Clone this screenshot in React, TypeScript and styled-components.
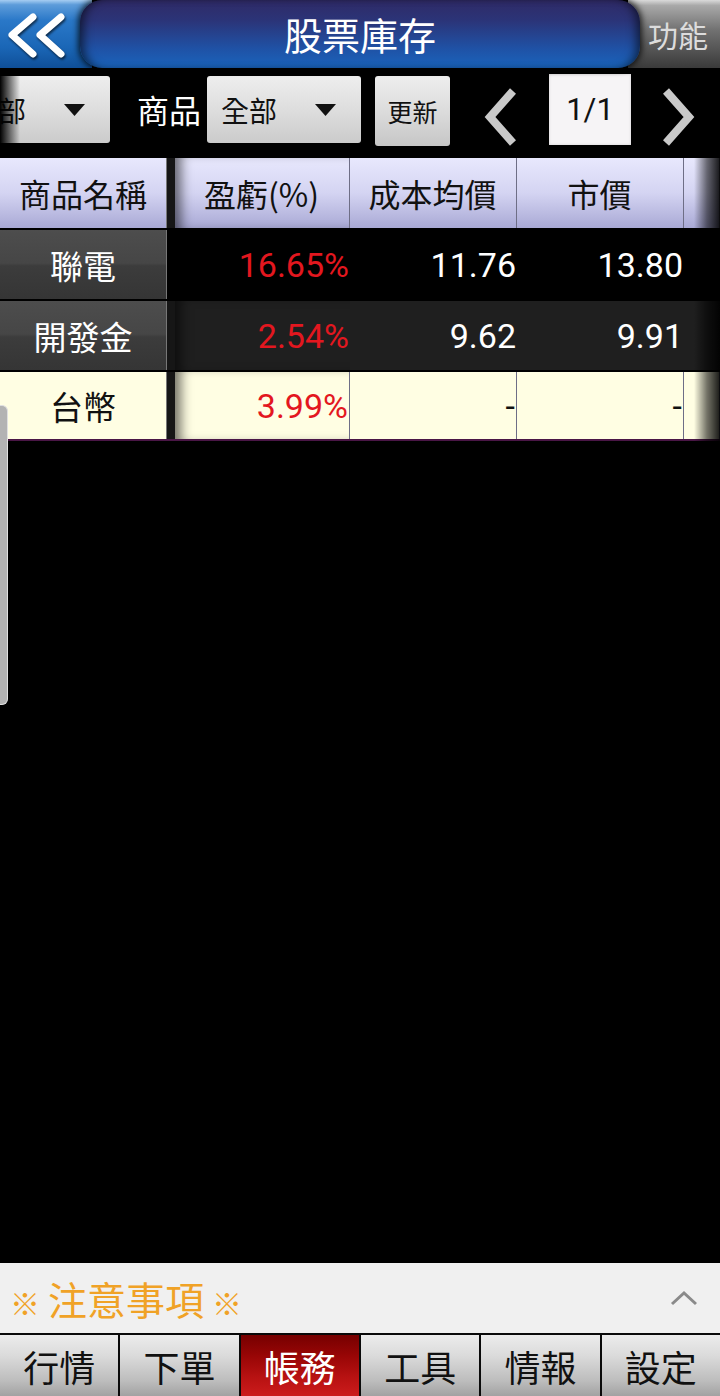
import React from "react";
import styled, { createGlobalStyle, css } from "styled-components";

const GlobalStyle = createGlobalStyle`
  html, body {
    margin: 0;
    padding: 0;
    background: #000;
  }
  body {
    font-family: "Noto Sans CJK TC", "Noto Sans", sans-serif;
  }
  * {
    box-sizing: border-box;
  }
`;

const Screen = styled.div`
  position: relative;
  width: 720px;
  height: 1396px;
  display: flex;
  flex-direction: column;
  background: #000;
  overflow: hidden;
`;

const TitleBar = styled.div`
  display: flex;
  height: 68px;
  margin-bottom: 2px;
`;

const BackButton = styled.div`
  width: 92px;
  display: flex;
  align-items: center;
  background: linear-gradient(180deg, #a6cdf2 0%, #5d9cda 7%, #2a78c8 30%, #1a66b6 70%, #0f4f98 100%);

  svg {
    filter: drop-shadow(1px 2px 1px rgba(0, 0, 0, 0.6));
  }
`;

const TitlePill = styled.div`
  position: relative;
  z-index: 1;
  flex: 1;
  margin: 0 -12px;
  border-radius: 22px;
  background: linear-gradient(180deg, #2f2a66 0%, #2b3478 30%, #1f52a6 72%, #1a64bc 100%);
  box-shadow: 0 0 6px 2px rgba(0, 0, 0, 0.75), inset 8px 0 10px -4px rgba(0, 0, 0, 0.55),
    inset -8px 0 10px -4px rgba(0, 0, 0, 0.55);
  color: #fff;
  font-size: 38px;
  line-height: 68px;
  text-align: center;
`;

const FuncButton = styled.div`
  width: 92px;
  padding-left: 20px;
  background: linear-gradient(180deg, #dadada 0%, #a9a9a9 8%, #707070 45%, #3a3a3a 100%);
  color: #dcdcdc;
  font-size: 30px;
  line-height: 68px;
  white-space: nowrap;
`;

const Toolbar = styled.div`
  position: relative;
  display: flex;
  align-items: flex-start;
  height: 88px;
  padding-top: 6px;
`;

const LeftFade = styled.div`
  position: absolute;
  left: 0;
  top: 0;
  bottom: 0;
  width: 20px;
  background: linear-gradient(90deg, #000 0%, rgba(0, 0, 0, 0.6) 40%, rgba(0, 0, 0, 0) 100%);
`;

const Dropdown = styled.div<{ $offset?: number }>`
  flex: none;
  width: 154px;
  height: 67px;
  margin-left: ${(p) => p.$offset ?? 0}px;
  display: flex;
  align-items: center;
  justify-content: space-between;
  padding: 0 25px 0 14px;
  border-radius: 3px;
  background: linear-gradient(180deg, #eeeeee 0%, #dcdcdc 55%, #cbcbcb 100%);
  color: #111;
  font-size: 28px;
`;

const Label = styled.div`
  margin: 0 6px 0 27px;
  color: #fff;
  font-size: 32px;
  line-height: 67px;
`;

const RefreshButton = styled.div`
  width: 75px;
  height: 70px;
  margin-left: 14px;
  display: flex;
  align-items: center;
  justify-content: center;
  border-radius: 3px;
  background: linear-gradient(180deg, #eeeeee 0%, #dadada 55%, #c6c6c6 100%);
  color: #111;
  font-size: 25px;
`;

const NavArrow = styled.svg<{ $gap: number }>`
  flex: none;
  margin-left: ${(p) => p.$gap}px;
  margin-top: 12px;
`;

const PageBox = styled.div`
  width: 82px;
  height: 71px;
  margin: -2px 0 0 31px;
  display: flex;
  align-items: center;
  justify-content: center;
  background: #f6f4f6;
  box-shadow: inset 0 0 3px rgba(0, 0, 0, 0.15);
  color: #111;
  font-family: Roboto, "Noto Sans", sans-serif;
  font-size: 31px;
`;

const Table = styled.div`
  position: relative;
  display: flex;
  flex-direction: column;
  gap: 2px;
`;

const RightFade = styled.div`
  position: absolute;
  top: 0;
  right: 0;
  bottom: 0;
  width: 26px;
  background: linear-gradient(90deg, rgba(0, 0, 0, 0) 0%, rgba(0, 0, 0, 0.55) 50%, rgba(0, 0, 0, 0.9) 100%);
  pointer-events: none;
`;

type Tone = "head" | "dark" | "mid" | "light";

const Row = styled.div<{ $tone: Tone }>`
  display: grid;
  grid-template-columns: 167px 183px 167px 167px 1fr;
  height: ${(p) => (p.$tone === "head" ? 70 : 69)}px;
  background: ${(p) =>
    p.$tone === "head"
      ? "linear-gradient(180deg, #e8e8fd 0%, #d4d4f2 50%, #a9a9d5 100%)"
      : p.$tone === "dark"
      ? "#000"
      : p.$tone === "mid"
      ? "#1f1f1f"
      : "#fffee3"};
  border-bottom: ${(p) => (p.$tone === "light" ? "2px solid #4a1646" : "none")};
`;

const NameCell = styled.div<{ $tone: Tone }>`
  display: flex;
  align-items: center;
  justify-content: center;
  font-size: ${(p) => (p.$tone === "head" ? 32 : 33)}px;
  border-right: 1px solid #777;
  ${(p) =>
    p.$tone === "dark" || p.$tone === "mid"
      ? css`
          color: #fff;
          background: linear-gradient(180deg, #4d4d4d 0%, #464646 48%, #3c3c3c 52%, #353535 100%);
        `
      : css`
          color: #111;
        `}
`;

const Cell = styled.div<{ $tone: Tone; $first?: boolean; $red?: boolean }>`
  display: flex;
  align-items: center;
  justify-content: ${(p) => (p.$tone === "head" ? "center" : "flex-end")};
  padding-right: 1px;
  font-size: ${(p) => (p.$tone === "head" ? 32 : 34)}px;
  font-family: ${(p) =>
    p.$tone === "head" ? `"Noto Sans CJK TC", sans-serif` : `Roboto, "Noto Sans", sans-serif`};
  color: ${(p) => (p.$red ? "#e3171f" : p.$tone === "dark" || p.$tone === "mid" ? "#fff" : "#111")};
  border-right: ${(p) => (p.$tone === "head" || p.$tone === "light" ? "1px solid #6e6e86" : "none")};
  ${(p) =>
    p.$first &&
    css`
      padding-left: 8px;
      box-shadow: inset 8px 0 0 ${p.$tone === "dark" ? "#000" : "#161616"},
        inset 20px 0 12px -6px rgba(0, 0, 0, 0.55);
    `}
`;

const Spacer = styled.div`
  flex: 1;
`;

const NoticeBar = styled.div`
  height: 70px;
  display: flex;
  align-items: center;
  justify-content: space-between;
  padding: 0 22px 0 6px;
  background: #f0f0f0;
  color: #f0a226;
  font-size: 39px;
`;

const Mark = styled.span`
  font-size: 30px;
  font-weight: 700;
  margin: 0 8px 0 4px;

  & + & {
    margin: 0 0 0 8px;
  }
`;

const TabBar = styled.div`
  display: grid;
  grid-template-columns: repeat(6, 1fr);
  gap: 2px;
  height: 63px;
  padding-top: 2px;
  background: #0a0a0a;
`;

const Tab = styled.div<{ $active?: boolean }>`
  display: flex;
  align-items: center;
  justify-content: center;
  font-size: 36px;
  color: ${(p) => (p.$active ? "#fff" : "#111")};
  background: ${(p) =>
    p.$active
      ? "linear-gradient(180deg, #760000 0%, #990606 35%, #b81212 70%, #cc1c1c 100%)"
      : "linear-gradient(180deg, #ececec 0%, #dadada 35%, #bdbdbd 75%, #a2a2a2 100%)"};
`;

const EdgeHandle = styled.div`
  position: absolute;
  left: 0;
  top: 405px;
  width: 8px;
  height: 300px;
  background: #b3b3b3;
  border: 1px solid #e0e0e0;
  border-left: none;
  border-radius: 0 6px 6px 0;
`;

const Caret = () => (
  <svg width="21" height="12" viewBox="0 0 21 12">
    <path d="M0 0 L21 0 L10.5 12 Z" fill="#111" />
  </svg>
);

interface Holding {
  name: string;
  pnl: string;
  cost: string;
  price: string;
  tone: Tone;
}

const holdings: Holding[] = [
  { name: "聯電", pnl: "16.65%", cost: "11.76", price: "13.80", tone: "dark" },
  { name: "開發金", pnl: "2.54%", cost: "9.62", price: "9.91", tone: "mid" },
  { name: "台幣", pnl: "3.99%", cost: "-", price: "-", tone: "light" },
];

const tabs = ["行情", "下單", "帳務", "工具", "情報", "設定"];

const App = () => {
  return (
    <>
      <GlobalStyle />
      <Screen>
        <TitleBar>
          <BackButton>
            <svg width="70" height="68" viewBox="0 0 70 68">
              <path
                d="M33 17 L12 35 L33 54 M61 17 L40 35 L61 54"
                fill="none"
                stroke="#fff"
                strokeWidth="7"
                strokeLinecap="round"
                strokeLinejoin="round"
              />
            </svg>
          </BackButton>
          <TitlePill>股票庫存</TitlePill>
          <FuncButton>功能</FuncButton>
        </TitleBar>

        <Toolbar>
          <Dropdown $offset={-44}>
            <span>全部</span>
            <Caret />
          </Dropdown>
          <Label>商品</Label>
          <Dropdown>
            <span>全部</span>
            <Caret />
          </Dropdown>
          <RefreshButton>更新</RefreshButton>
          <NavArrow $gap={34} width="34" height="58" viewBox="0 0 34 58">
            <path d="M29 3 L6 29 L29 55" fill="none" stroke="#c9c9c9" strokeWidth="8" />
          </NavArrow>
          <PageBox>1/1</PageBox>
          <NavArrow $gap={30} width="34" height="58" viewBox="0 0 34 58">
            <path d="M5 3 L28 29 L5 55" fill="none" stroke="#c9c9c9" strokeWidth="8" />
          </NavArrow>
          <LeftFade />
        </Toolbar>

        <Table>
          <Row $tone="head">
            <NameCell $tone="head">商品名稱</NameCell>
            <Cell $tone="head" $first>盈虧(%)</Cell>
            <Cell $tone="head">成本均價</Cell>
            <Cell $tone="head">市價</Cell>
            <Cell $tone="head" />
          </Row>
          {holdings.map((h) => (
            <Row key={h.name} $tone={h.tone}>
              <NameCell $tone={h.tone}>{h.name}</NameCell>
              <Cell $tone={h.tone} $first $red>
                {h.pnl}
              </Cell>
              <Cell $tone={h.tone}>{h.cost}</Cell>
              <Cell $tone={h.tone}>{h.price}</Cell>
              <Cell $tone={h.tone} />
            </Row>
          ))}
          <RightFade />
        </Table>

        <Spacer />

        <NoticeBar>
          <span>
            <Mark>※</Mark>注意事項<Mark>※</Mark>
          </span>
          <svg width="28" height="16" viewBox="0 0 28 16">
            <path d="M2 14 L14 3 L26 14" fill="none" stroke="#8a8a8a" strokeWidth="3" />
          </svg>
        </NoticeBar>

        <TabBar>
          {tabs.map((t) => (
            <Tab key={t} $active={t === "帳務"}>
              {t}
            </Tab>
          ))}
        </TabBar>

        <EdgeHandle />
      </Screen>
    </>
  );
};

export default App;
